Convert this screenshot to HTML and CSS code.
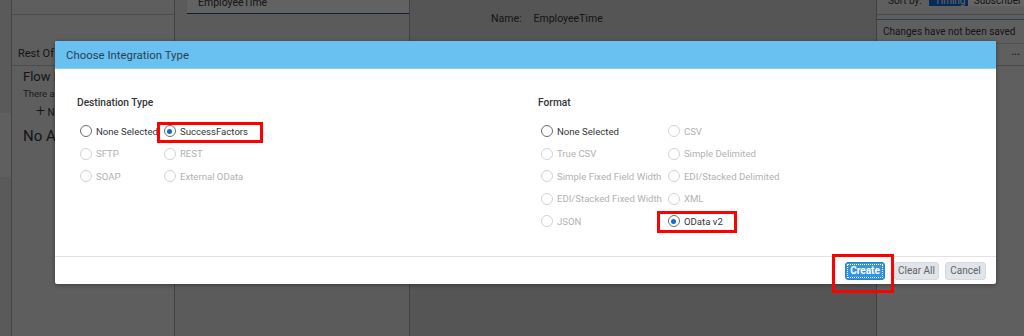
FILE: index.html
```html
<!DOCTYPE html>
<html lang="en">
<head>
<meta charset="utf-8">
<title>Choose Integration Type</title>
<link rel="stylesheet" href="styles.css">
</head>
<body>
<div class="app">
  <div class="sidebar"><div class="side-sel"></div></div>
  <div class="list-panel">
    <div class="lp-top"></div>
    <div class="lp-title">Rest Of</div>
    <div class="flow">
      <div class="flow-h">Flow Details</div>
      <div class="flow-sub">There are no items</div>
      <div class="flow-add"><span class="plus">+</span> New</div>
      <div class="no-act">No Actions</div>
    </div>
  </div>
  <div class="mid">
    <div class="tab"><span class="tab-label">EmployeeTime</span></div>
  </div>
  <div class="main">
    <div class="name-row"><span>Name:</span><span>EmployeeTime</span></div>
  </div>
  <div class="right">
    <div class="sort-row">
      <span class="sort-label">Sort by:</span>
      <span class="seg seg-on">Timing</span>
      <span class="seg">Subscriber</span>
    </div>
    <div class="status">Changes have not been saved</div>
    <div class="more-row"><span class="dots">&bull;&bull;&bull;</span></div>
  </div>
</div>

<div class="backdrop"></div>

<div class="dialog">
  <div class="dlg-header">Choose Integration Type</div>
  <div class="dlg-body">
    <div class="section">
      <div class="sec-label">Destination Type</div>
      <div class="radios">
        <div class="radio"><span class="circle"></span><span class="txt">None Selected</span></div>
        <div class="radio mark mark-sf"><span class="circle on"></span><span class="txt">SuccessFactors</span></div>
        <div class="radio off"><span class="circle"></span><span class="txt">SFTP</span></div>
        <div class="radio off"><span class="circle"></span><span class="txt">REST</span></div>
        <div class="radio off"><span class="circle"></span><span class="txt">SOAP</span></div>
        <div class="radio off"><span class="circle"></span><span class="txt">External OData</span></div>
      </div>
    </div>
    <div class="section">
      <div class="sec-label">Format</div>
      <div class="radios">
        <div class="radio"><span class="circle"></span><span class="txt">None Selected</span></div>
        <div class="radio off"><span class="circle"></span><span class="txt">CSV</span></div>
        <div class="radio off"><span class="circle"></span><span class="txt">True CSV</span></div>
        <div class="radio off"><span class="circle"></span><span class="txt">Simple Delimited</span></div>
        <div class="radio off"><span class="circle"></span><span class="txt">Simple Fixed Field Width</span></div>
        <div class="radio off"><span class="circle"></span><span class="txt">EDI/Stacked Delimited</span></div>
        <div class="radio off"><span class="circle"></span><span class="txt">EDI/Stacked Fixed Width</span></div>
        <div class="radio off"><span class="circle"></span><span class="txt">XML</span></div>
        <div class="radio off"><span class="circle"></span><span class="txt">JSON</span></div>
        <div class="radio mark mark-od"><span class="circle on"></span><span class="txt">OData v2</span></div>
      </div>
    </div>
  </div>
  <div class="dlg-footer">
    <button class="btn btn-primary mark mark-create">Create</button>
    <button class="btn btn-clear">Clear All</button>
    <button class="btn btn-cancel">Cancel</button>
  </div>
</div>
</body>
</html>
```

FILE: styles.css
```css
*, *::before, *::after { box-sizing: border-box; margin: 0; padding: 0; }
html, body { width: 1024px; height: 336px; overflow: hidden; }
body {
  font-family: Roboto, "Noto Sans", sans-serif;
  position: relative;
  background: #d6d6d6;
  color: #32363a;
}

/* ---------- background application ---------- */
.app { display: flex; height: 336px; }
.sidebar { width: 12px; background: #e0e0e0; border-right: 1px solid #ababab; padding-top: 113px; }
.side-sel { height: 64px; background: #eeeeee; }

.list-panel { width: 163px; background: #ebebeb; border-right: 1px solid #a9a9a9; white-space: nowrap; overflow: hidden; }
.lp-top { height: 15px; border-bottom: 1px solid #bcbcbc; }
.lp-title { height: 51px; padding: 32px 0 0 6px; font-size: 11px; line-height: 13px; border-bottom: 1px solid #bfbfbf; }
.flow { padding: 2px 0 0 11px; }
.flow-h { font-size: 13px; line-height: 18px; }
.flow-sub { font-size: 9.5px; line-height: 12px; margin-top: 2px; color: #4a4d50; }
.flow-add { font-size: 10px; line-height: 16px; margin-top: 3px; padding-left: 13px; }
.plus { font-size: 16px; font-weight: 300; }
.no-act { font-size: 15px; line-height: 20px; margin-top: 5px; }

.mid { width: 235px; background: #e4e4e4; border-right: 1px solid #a6a6a6; padding-left: 12px; }
.tab { width: 222px; height: 14px; background: #f6f6f6; border-bottom: 1px solid #1d4d85; padding-left: 11px; overflow: hidden; }
.tab-label { display: block; margin-top: -3px; font-size: 10.5px; line-height: 12px; }

.main { width: 467px; background: #d5d5d5; border-right: 1px solid #a3a3a3; }
.name-row { display: flex; gap: 12px; padding: 13px 0 0 81px; font-size: 10.5px; line-height: 12px; }

.right { flex: 1; background: #eeeeee; overflow: hidden; }
.sort-row { height: 15px; border-bottom: 1px solid #bcbcbc; display: flex; align-items: flex-start; padding-left: 11px; font-size: 10px; white-space: nowrap; }
.sort-label { margin-top: -5px; line-height: 12px; margin-right: 7px; }
.seg { margin-top: -5px; height: 11px; line-height: 12px; padding: 0 6px; background: #ffffff; white-space: nowrap; }
.seg-on { background: #0a6ed1; color: #ffffff; width: 39px; flex: none; }
.status { margin-top: 4px; height: 25px; border-top: 1px solid #6b9fd6; border-bottom: 1px solid #c8c8c8; padding-left: 6px; font-size: 10px; line-height: 23px; white-space: nowrap; }
.more-row { height: 22px; border-bottom: 1px solid #bcbcbc; display: flex; justify-content: flex-end; align-items: center; padding-right: 4px; }
.dots { font-size: 7px; line-height: 10px; letter-spacing: 0.5px; color: #444; }

/* ---------- modal ---------- */
.backdrop { position: absolute; inset: 0; background: rgba(0, 0, 0, 0.6); }

.dialog {
  position: absolute;
  left: 55px; top: 41px;
  width: 941px; height: 243px;
  background: #ffffff;
  border-radius: 2px;
  box-shadow: 0 1px 4px rgba(0, 0, 0, 0.35);
  display: flex; flex-direction: column;
}
.dlg-header {
  height: 28px;
  background: #69c1f1;
  border-radius: 2px 2px 0 0;
  border-bottom: 1px solid #8fd0f4;
  padding-left: 11px;
  font-size: 11.4px;
  line-height: 28px;
  color: #2c3f53;
}
.dlg-body {
  height: 188px;
  border-bottom: 1px solid #e2e2e2;
  display: grid;
  grid-template-columns: 461px 1fr;
  padding: 27px 0 0 22px;
}
.sec-label { font-size: 10.2px; font-weight: 500; line-height: 14px; margin-bottom: 10px; color: #32363a; }
.radios {
  display: grid;
  grid-template-columns: auto auto;
  grid-auto-rows: 22.5px;
  column-gap: 3px;
  justify-content: start;
}
.radio { display: flex; align-items: center; gap: 4px; padding-left: 3px; font-size: 9.6px; color: #32363a; position: relative; white-space: nowrap; }
.circle {
  width: 12px; height: 12px; flex: none;
  border: 1px solid #6a6d70;
  border-radius: 50%;
  display: flex; align-items: center; justify-content: center;
}
.circle.on::before { content: ""; width: 5px; height: 5px; border-radius: 50%; background: #0a6ed1; }
.radio.off { color: #b2b2b2; }
.radio.off .circle { border-color: #d3d3d3; }

.dlg-footer {
  flex: 1;
  display: flex;
  justify-content: flex-end;
  align-items: center;
  gap: 6px;
  padding-right: 10px;
}
.btn {
  height: 18px;
  padding: 0;
  font-family: Roboto, "Noto Sans", sans-serif;
  font-size: 10px;
  white-space: nowrap;
  border: 1px solid #d5dadf;
  border-radius: 3px;
  background: #e1e4e8;
  color: #5f6367;
  position: relative;
}
.btn-clear { width: 45px; }
.btn-cancel { width: 41px; }
.btn-primary {
  width: 40px;
  margin-right: 3px;
  background: #3395e0;
  border-color: #2a82c9;
  color: #ffffff;
  font-weight: 700;
  outline: 1px dotted #ffffff;
  outline-offset: -3px;
}

/* red annotation frames */
.mark::after { content: ""; position: absolute; border: 3px solid #ff0000; pointer-events: none; }
.mark-sf::after { left: -4px; top: 2px; width: 106px; height: 21px; }
.mark-od::after { left: -8px; top: 1px; width: 80px; height: 22px; }
.mark-create::after { left: -14px; top: -9px; width: 62px; height: 39px; }
```
